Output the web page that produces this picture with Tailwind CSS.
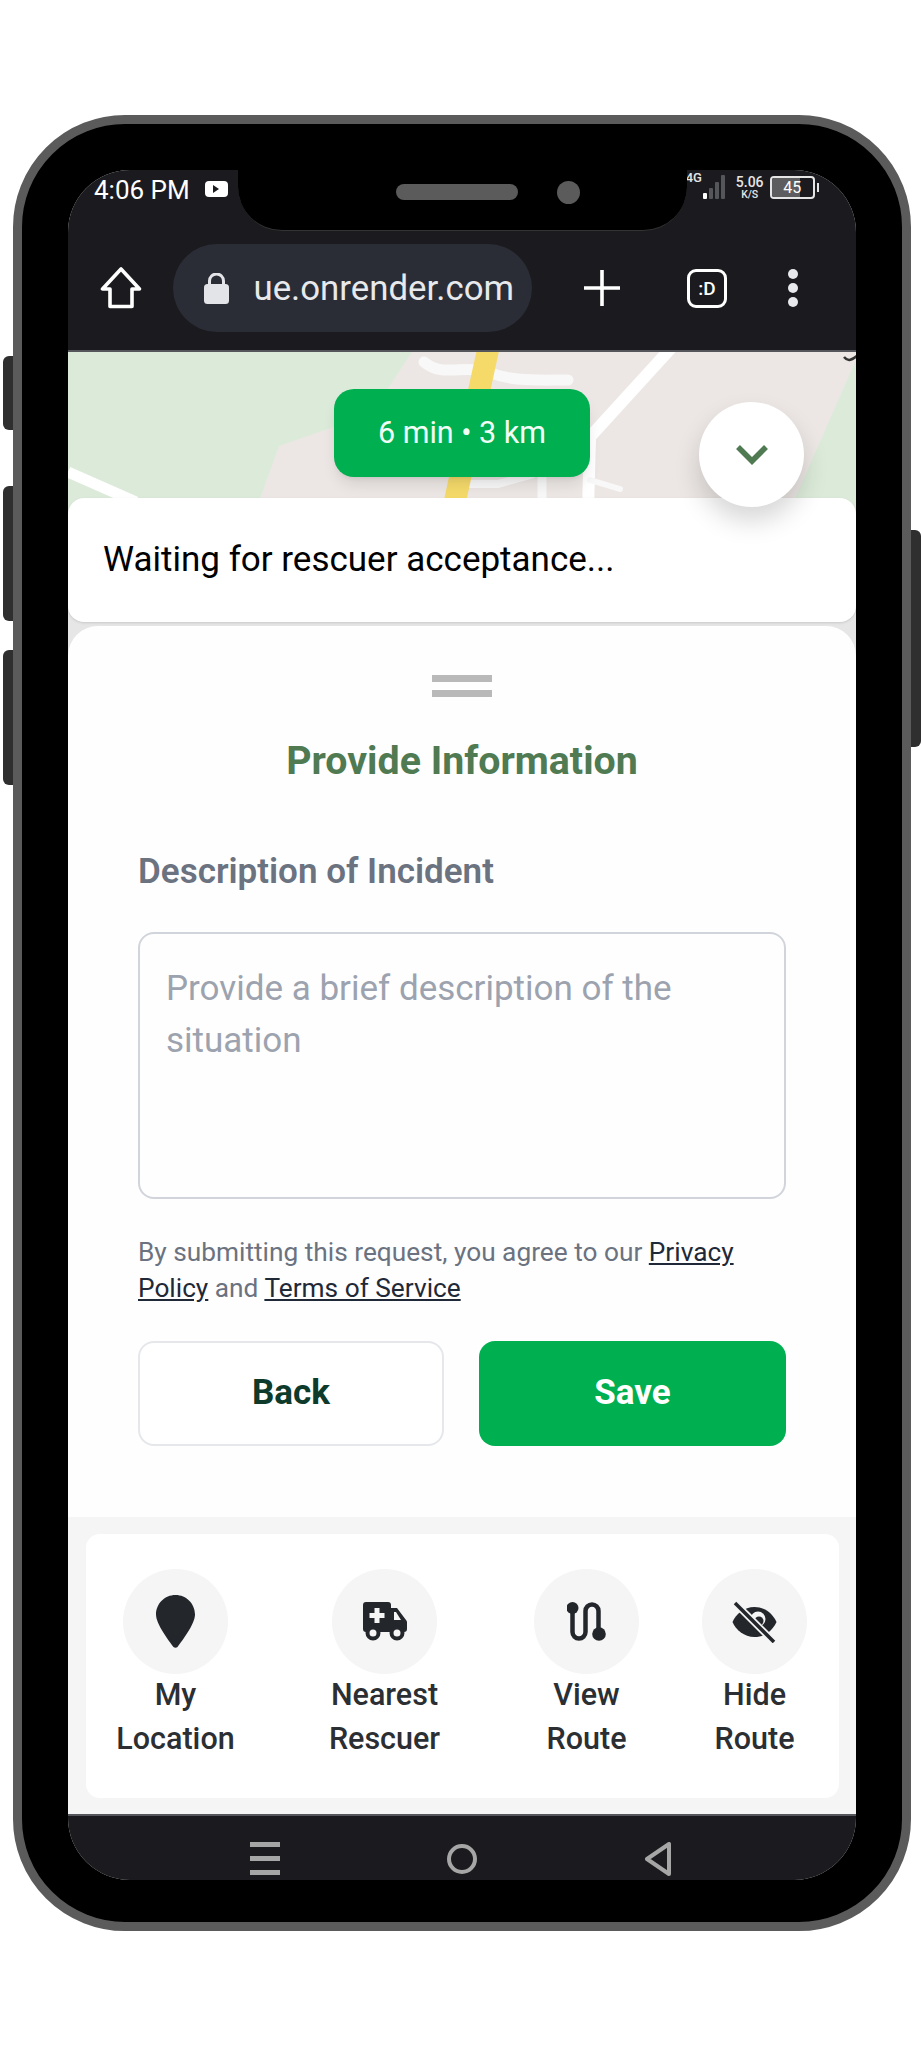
<!DOCTYPE html>
<html lang="en">
<head>
    <meta charset="UTF-8">
    <meta name="viewport" content="width=device-width, initial-scale=1.0">
    <title>Provide Information</title>
    <script src="https://cdn.jsdelivr.net/npm/@tailwindcss/browser@4"></script>
</head>
<body class="bg-white font-['Roboto',sans-serif]">
<div class="w-[921px] h-[2048px] pt-[115px] pl-[13px] overflow-hidden">
    <!-- phone frame -->
    <div class="relative w-[898px] h-[1816px] rounded-[112px] bg-black border-[9px] border-[#5b5b5b] pt-[46px] pl-[46px]">
        <div class="absolute left-[-19px] top-[232px] w-[10px] h-[74px] rounded-l-[6px] bg-[#2f2f2f]"></div>
        <div class="absolute left-[-19px] top-[362px] w-[10px] h-[135px] rounded-l-[6px] bg-[#2f2f2f]"></div>
        <div class="absolute left-[-19px] top-[526px] w-[10px] h-[135px] rounded-l-[6px] bg-[#2f2f2f]"></div>
        <div class="absolute right-[-19px] top-[406px] w-[10px] h-[217px] rounded-r-[6px] bg-[#2f2f2f]"></div>

        <!-- screen -->
        <div class="w-[788px] h-[1710px] rounded-[62px] overflow-hidden bg-[#e6e6e6] flex flex-col">
            <!-- status + browser bar -->
            <div class="relative h-[182px] shrink-0 bg-[#1b1b1f] border-b-2 border-[#55565c]">
                <div class="absolute left-[170px] top-[-2px] w-[449px] h-[63px] bg-black rounded-b-[44px] flex items-center justify-center gap-[39px] pb-[14px] pl-[50px] border-b border-[#333] z-10">
                    <div class="w-[122px] h-[16px] rounded-full bg-[#5b5b5b]"></div>
                    <div class="w-[23px] h-[23px] rounded-full bg-[#5b5b5b]"></div>
                </div>

                <div class="flex items-center h-[38px] pt-[2px] pl-[26px]">
                    <span class="text-[26px] leading-none text-white">4:06 PM</span>
                    <div class="ml-[15px] mt-[-3px] w-[23px] h-[16px] rounded-[4px] bg-white flex items-center justify-center">
                        <svg width="8" height="8" viewBox="0 0 8 8"><path d="M1 0l6 4-6 4z" fill="#1b1b1f"/></svg>
                    </div>
                    <div class="ml-[458px] mt-[-6px] flex items-center">
                        <span class="text-[13px] leading-none font-medium text-[#e5e5e5] self-start mt-[-2px] w-[16px]">4G</span>
                        <svg width="24" height="26" viewBox="0 0 24 26" class="mt-[2px]">
                            <rect x="1" y="18" width="4" height="6" rx="1" fill="#fff"/>
                            <rect x="7" y="13" width="4" height="11" rx="1" fill="#55565a"/>
                            <rect x="13" y="7" width="4" height="17" rx="1" fill="#55565a"/>
                            <rect x="19" y="0" width="4" height="24" rx="1" fill="#55565a"/>
                        </svg>
                        <div class="ml-[10px] w-[28px] flex flex-col items-center text-[#e5e5e5] font-medium">
                            <span class="text-[14px] leading-[14px]">5.06</span>
                            <span class="text-[10.5px] leading-[11px]">K/S</span>
                        </div>
                        <div class="ml-[6px] relative w-[45px] h-[23px] rounded-[4px] border-2 border-[#e5e5e5] flex items-center overflow-hidden">
                            <div class="w-[28px] h-full bg-[#5d5d5f]"></div>
                            <span class="absolute inset-0 text-center text-[16px] leading-[19px] text-white">45</span>
                        </div>
                        <div class="ml-[2px] w-[2px] h-[9px] bg-[#e5e5e5]"></div>
                    </div>
                </div>

                <div class="flex items-center h-[88px] mt-[36px]">
                    <svg class="ml-[32px]" width="42" height="42" viewBox="0 0 42 42" fill="none" stroke="#fff" stroke-width="3.6" stroke-linejoin="round"><path d="M21 2L2.500 22H10V39.500H32V22H39.500z"/></svg>
                    <div class="ml-[31px] w-[359px] h-[88px] rounded-full bg-[#2a2d36] flex items-center overflow-hidden">
                        <svg class="ml-[31px] shrink-0" width="25" height="31" viewBox="0 0 25 31" fill="#e3e4e8"><path d="M5.500 12V8a7 7 0 0 1 14 0v4" fill="none" stroke="#e3e4e8" stroke-width="3"/><rect y="11" width="25" height="20" rx="3.500"/></svg>
                        <div class="ml-[24px] w-[261px] shrink-0 flex justify-end overflow-hidden">
                            <span class="text-[34.8px] leading-none text-[#e8e9ec] whitespace-nowrap">rescue.onrender.com</span>
                        </div>
                    </div>
                    <svg class="ml-[52px]" width="36" height="36" viewBox="0 0 36 36" stroke="#fff" stroke-width="3.6"><path d="M18 0V36M0 18H36"/></svg>
                    <div class="ml-[67px] w-[40px] h-[39px] rounded-[9px] border-[3px] border-white flex items-center justify-center text-[19px] font-medium leading-none text-white">:D</div>
                    <div class="ml-[61px] flex flex-col gap-[4px]">
                        <div class="w-[10px] h-[10px] rounded-full bg-[#e8e9ec]"></div>
                        <div class="w-[10px] h-[10px] rounded-full bg-[#e8e9ec]"></div>
                        <div class="w-[10px] h-[10px] rounded-full bg-[#e8e9ec]"></div>
                    </div>
                </div>
            </div>

            <!-- map -->
            <div class="relative h-[158px] shrink-0 bg-[#ece7e4]">
                <svg class="absolute inset-0" width="788" height="158" viewBox="0 0 788 158" fill="none">
                    <path d="M0 0H344L303 62L211 94L188 158H0z" fill="#dcebd9"/>
                    <path d="M788 8L722 158H788z" fill="#dcebd9"/>
                    <path d="M604 -5L522 85L520 158" stroke="#fff" stroke-width="12"/>
                    <path d="M356 10C375 26 395 12 420 20C445 30 470 28 500 28" stroke="#f8f8f8" stroke-width="11" stroke-linecap="round"/>
                    <path d="M400 132H430L466 122" stroke="#f8f8f8" stroke-width="8"/>
                    <path d="M474 120V158" stroke="#f8f8f8" stroke-width="9"/>
                    <path d="M522 128L552 137" stroke="#f8f8f8" stroke-width="6" stroke-linecap="round"/>
                    <path d="M0 120L68 150" stroke="#fff" stroke-width="11"/>
                    <path d="M420 -2L385 158" stroke="#f5da6a" stroke-width="22"/>
                    <path d="M776 5C780 10 784 8 790 3" stroke="#333" stroke-width="2.500"/>
                </svg>
                <div class="absolute left-[266px] top-[37px] w-[256px] h-[88px] rounded-[20px] bg-[#00b050] shadow-lg flex items-center justify-center text-[30.5px] text-[#f2fff7]">6 min • 3 km</div>
            </div>

            <!-- waiting card -->
            <div class="relative h-[124px] mt-[-12px] shrink-0 bg-white rounded-[16px] shadow-sm flex items-center pl-[35px] text-[35px] text-black">
                Waiting for rescuer acceptance...
                <div class="absolute left-[631px] top-[-96px] w-[105px] h-[105px] rounded-full bg-white shadow-[0_14px_26px_rgba(0,0,0,0.16)] flex items-center justify-center">
                    <svg width="32" height="20" viewBox="0 0 32 20" fill="none" stroke="#4f7a52" stroke-width="5.500"><path d="M2 2L16 16L30 2"/></svg>
                </div>
            </div>

            <!-- information panel -->
            <div class="mt-[4px] h-[891px] shrink-0 bg-[#fefefe] rounded-t-[30px] px-[70px] pt-[49px] flex flex-col">
                <div class="self-center w-[60px] flex flex-col gap-[8px]">
                    <div class="h-[7px] bg-[#b9b9b9]"></div>
                    <div class="h-[7px] bg-[#b9b9b9]"></div>
                </div>
                <h1 class="mt-[39px] text-center text-[39.3px] leading-[50px] font-bold text-[#4f7a52]">Provide Information</h1>
                <h2 class="mt-[64px] text-[35px] leading-[44px] font-semibold text-[#6b7280]">Description of Incident</h2>
                <div class="mt-[38px] w-[648px] h-[267px] rounded-[16px] border-[2.5px] border-[#d1d5db] pl-[26px] pr-[20px] pt-[29px] text-[35px] leading-[52px] text-[#9ca3af]">Provide a brief description of the situation</div>
                <p class="mt-[35px] w-[648px] text-[26.25px] leading-[36px] text-[#6b7280]">By submitting this request, you agree to our <span class="underline text-[#1f2937]">Privacy Policy</span> and <span class="underline text-[#1f2937]">Terms of Service</span></p>
                <div class="mt-[35px] flex gap-[35px] w-[648px]">
                    <div class="w-[306px] h-[105px] rounded-[16px] border-2 border-[#e5e7eb] bg-white flex items-center justify-center text-[35px] font-bold text-[#0d3a2a]">Back</div>
                    <div class="w-[307px] h-[105px] rounded-[16px] bg-[#00b050] flex items-center justify-center text-[35px] font-bold text-white">Save</div>
                </div>
            </div>

            <!-- action bar -->
            <div class="h-[297px] shrink-0 bg-[#f5f5f5] px-[17.5px] pt-[17px]">
                <div class="relative w-[753px] h-[264px] rounded-[14px] bg-white text-[30.5px] leading-[44px] font-medium text-[#2b2f33] text-center">
                    <div class="absolute left-[30px] top-[35px] w-[120px] flex flex-col items-center">
                        <div class="w-[105px] h-[105px] rounded-full bg-[#f5f5f5] flex items-center justify-center">
                            <svg width="39" height="53" viewBox="0 0 39 53" fill="#23272c"><path d="M19.500 0C8.700 0 0 8.700 0 19.500 0 29 13 46 17.500 52c1 1 3 1 4 0C26 46 39 29 39 19.500 39 8.700 30.300 0 19.500 0z"/></svg>
                        </div>
                        <div class="mt-[-1px]">My<br>Location</div>
                    </div>
                    <div class="absolute left-[239px] top-[35px] w-[120px] flex flex-col items-center">
                        <div class="w-[105px] h-[105px] rounded-full bg-[#f5f5f5] flex items-center justify-center">
                            <svg width="44" height="39" viewBox="0 0 44 39"><path d="M3 0H25a3 3 0 0 1 3 3V6h6l9 12a3 3 0 0 1 1 2v7a3 3 0 0 1-3 3H3a3 3 0 0 1-3-3V3a3 3 0 0 1 3-3z" fill="#23272c"/><path d="M31 10h2l5 8h-7z" fill="#f5f5f5"/><path d="M11.500 6h5v5h5v5h-5v5h-5v-5h-5v-5h5z" fill="#f5f5f5"/><circle cx="10" cy="31" r="5.500" fill="#f5f5f5" stroke="#23272c" stroke-width="4"/><circle cx="34" cy="31" r="5.500" fill="#f5f5f5" stroke="#23272c" stroke-width="4"/></svg>
                        </div>
                        <div class="mt-[-1px]">Nearest<br>Rescuer</div>
                    </div>
                    <div class="absolute left-[441px] top-[35px] w-[120px] flex flex-col items-center">
                        <div class="w-[105px] h-[105px] rounded-full bg-[#f5f5f5] flex items-center justify-center">
                            <svg width="39" height="39" viewBox="0 0 39 39" fill="none" stroke="#23272c" stroke-width="4.500"><path d="M5.500 6V30a6.500 6.500 0 0 0 13 0V9a6.500 6.500 0 0 1 13 0V32"/><circle cx="5.500" cy="6" r="6" fill="#23272c" stroke="none"/><circle cx="32" cy="32" r="6.800" fill="#23272c" stroke="none"/></svg>
                        </div>
                        <div class="mt-[-1px]">View<br>Route</div>
                    </div>
                    <div class="absolute left-[609px] top-[35px] w-[120px] flex flex-col items-center">
                        <div class="w-[105px] h-[105px] rounded-full bg-[#f5f5f5] flex items-center justify-center">
                            <svg width="45" height="42" viewBox="0 0 45 42" fill="none"><path d="M22.500 6C12 6 4 13 .5 21 4 29 12 36 22.500 36 33 36 41 29 44.500 21 41 13 33 6 22.500 6z" fill="#23272c"/><circle cx="26" cy="18" r="7.500" fill="#f5f5f5"/><circle cx="27" cy="20" r="4.500" fill="#23272c"/><path d="M3 2L42 41" stroke="#f5f5f5" stroke-width="7"/><path d="M3 2L42 41" stroke="#23272c" stroke-width="3.600"/></svg>
                        </div>
                        <div class="mt-[-1px]">Hide<br>Route</div>
                    </div>
                </div>
            </div>

            <!-- android nav bar -->
            <div class="flex-1 bg-[#1b1b1f] border-t-2 border-[#55565c] pt-[21px] flex items-center">
                <div class="ml-[182px] w-[30px] flex flex-col gap-[9px]">
                    <div class="h-[5px] bg-[#a6a6a6]"></div>
                    <div class="h-[5px] bg-[#a6a6a6]"></div>
                    <div class="h-[5px] bg-[#a6a6a6]"></div>
                </div>
                <div class="ml-[167px] w-[30px] h-[30px] rounded-full border-[4px] border-[#a6a6a6]"></div>
                <svg class="ml-[168px]" width="26" height="34" viewBox="0 0 26 34" fill="none" stroke="#a6a6a6" stroke-width="4" stroke-linejoin="round"><path d="M24 2V32L2 17z"/></svg>
            </div>
        </div>
    </div>
</div>
</body>
</html>
